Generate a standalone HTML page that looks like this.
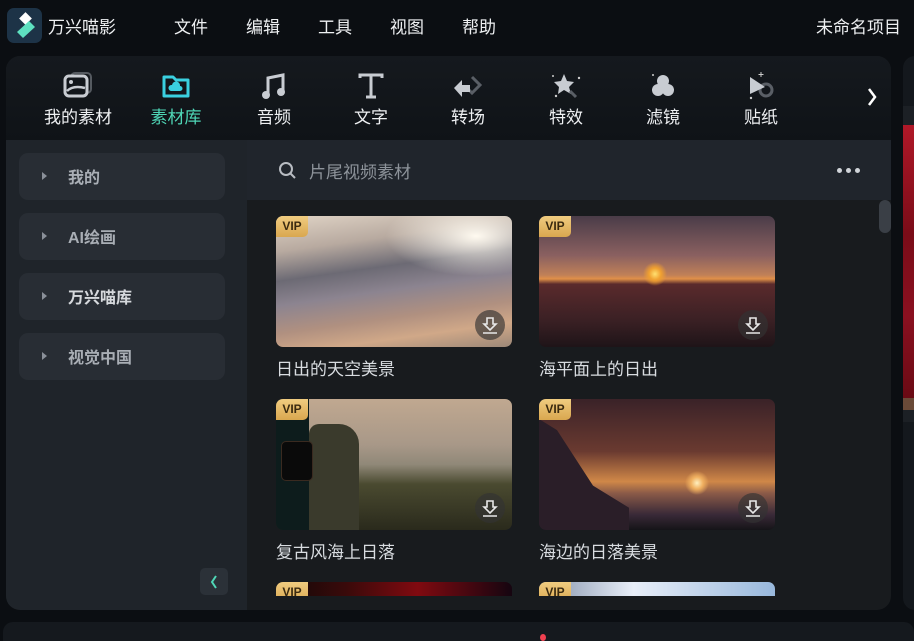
<!DOCTYPE html>
<html><head><meta charset="utf-8"><style>
*{margin:0;padding:0;box-sizing:border-box}
html,body{width:914px;height:641px;overflow:hidden}
body{background:#0b0e12;font-family:"Liberation Sans","Noto Sans CJK SC",sans-serif;color:#e6e8eb;position:relative}
.abs{position:absolute}
.menu{top:13px;font-size:17px;color:#eef0f2}
.tab{position:absolute;top:71px;width:80px;text-align:center}
.tab svg{display:block;margin:0 auto;height:30px}
.tab span{display:block;font-size:17px;margin-top:2px;color:#eef0f2}
.side{position:absolute;left:19px;width:206px;height:47px;background:#282d34;border-radius:9px}
.side .tri{position:absolute;left:23px;top:19px;width:0;height:0;border-left:5px solid #8a9099;border-top:4px solid transparent;border-bottom:4px solid transparent}
.side b{position:absolute;left:49px;top:11px;font-size:16px;color:#a9aeb5}
.card{position:absolute;width:236px;height:131px;border-radius:7px;overflow:hidden}
.vip{position:absolute;left:0;top:0;width:32px;height:21px;background:linear-gradient(#f0cc80,#d9a74f);border-radius:0 0 5px 0;color:#3a2a10;font:bold 12px "Liberation Sans",sans-serif;text-align:center;line-height:21px}
.dl{position:absolute;right:7px;bottom:7px;width:30px;height:30px;border-radius:50%;background:rgba(50,50,50,.65)}
.dl svg{position:absolute;left:7px;top:6px}
.lbl{position:absolute;font-size:17px;color:#d8dce0}
</style></head><body>
<!-- top bar -->
<div class="abs" style="left:7px;top:8px;width:35px;height:35px;border-radius:7px;background:#1d3347"></div>
<svg class="abs" style="left:7px;top:8px" width="35" height="35"><rect x="14" y="6" width="9" height="9" fill="#fff" transform="rotate(45 18.5 10.5)"/><path d="M10 24 L22 13 L28 19 L16 30 Z" fill="#5ee0c0"/></svg>
<div class="abs menu" style="left:48px">万兴喵影</div>
<div class="abs menu" style="left:174px">文件</div>
<div class="abs menu" style="left:246px">编辑</div>
<div class="abs menu" style="left:318px">工具</div>
<div class="abs menu" style="left:390px">视图</div>
<div class="abs menu" style="left:462px">帮助</div>
<div class="abs menu" style="left:816px">未命名项目</div>

<!-- main panel -->
<div class="abs" style="left:6px;top:56px;width:885px;height:554px;border-radius:14px;background:#181b1e;overflow:hidden">
 <div class="abs" style="left:0;top:0;width:885px;height:84px;background:linear-gradient(#15191e,#0f1317)"></div>
 <div class="abs" style="left:0;top:84px;width:241px;height:470px;background:#1f242a"></div>
 <div class="abs" style="left:241px;top:84px;width:644px;height:60px;background:#20252c"></div>
</div>
<!-- tabs -->
<div class="tab" style="left:38px"><svg width="34" height="30" viewBox="0 0 34 30"><rect x="10" y="2" width="20" height="20" rx="4" fill="none" stroke="#555a60" stroke-width="2"/><rect x="4" y="5" width="22" height="20" rx="4" fill="#12161b" stroke="#c8ccd2" stroke-width="3"/><circle cx="10" cy="11" r="2" fill="#c8ccd2"/><path d="M6 20 Q12 14 24 17" stroke="#c8ccd2" stroke-width="2.5" fill="none"/></svg><span>我的素材</span></div>
<div class="tab" style="left:136px"><svg width="30" height="30"><path d="M3 6 h9 l3 3 h12 v16 h-24 z" fill="none" stroke="#3ad0e0" stroke-width="3" stroke-linejoin="round"/><path d="M10 20 a3 3 0 0 1 1-6 a4 4 0 0 1 8 1 a2.5 2.5 0 0 1 0 5z" fill="#3ad0e0"/></svg><span style="color:#4fd6b6">素材库</span></div>
<div class="tab" style="left:234px"><svg width="30" height="30"><path d="M9 24 V7 L24 4 V21" stroke="#c8ccd2" stroke-width="3" fill="none"/><circle cx="7" cy="24" r="4" fill="#c8ccd2"/><circle cx="22" cy="21" r="4" fill="#c8ccd2"/></svg><span>音频</span></div>
<div class="tab" style="left:331px"><svg width="30" height="30"><path d="M4 7 V4 H26 V7 M15 4 V26 M10 26 H20" stroke="#c8ccd2" stroke-width="3" fill="none"/></svg><span>文字</span></div>
<div class="tab" style="left:428px"><svg width="36" height="30"><path d="M22 6 l8 8 -8 8 -4-4" stroke="#5a5f66" stroke-width="3" fill="none"/><path d="M4 17 l8-8 v5 h8 v7 h-8 v5z" fill="#c8ccd2"/></svg><span>转场</span></div>
<div class="tab" style="left:526px"><svg width="36" height="30"><path d="M16 3 l3 7 7 1 -5 5 2 7 -7-4 -6 4 1-7 -5-5 7-1z" fill="#c8ccd2"/><path d="M22 20 l6 6" stroke="#5a5f66" stroke-width="3"/><circle cx="5" cy="5" r="1" fill="#ccc"/><circle cx="31" cy="7" r="1.2" fill="#ccc"/><circle cx="8" cy="25" r="1.2" fill="#ccc"/></svg><span>特效</span></div>
<div class="tab" style="left:623px"><svg width="30" height="30"><circle cx="15" cy="10" r="6" fill="#c8ccd2"/><circle cx="10" cy="19" r="6" fill="#c8ccd2"/><circle cx="20" cy="19" r="6" fill="#c8ccd2"/><circle cx="5" cy="4" r="1" fill="#ccc"/></svg><span>滤镜</span></div>
<div class="tab" style="left:721px"><svg width="34" height="30"><circle cx="22" cy="19" r="6" fill="none" stroke="#5a5f66" stroke-width="3"/><path d="M6 6 L21 16 L6 23 Z" fill="#c8ccd2"/><path d="M17 1 v5 M14.5 3.5 h5" stroke="#ccc" stroke-width="1"/><circle cx="7" cy="27" r="1.2" fill="#ccc"/></svg><span>贴纸</span></div>
<svg class="abs" style="left:866px;top:86px" width="12" height="22"><path d="M3 3 L9 11 L3 19" stroke="#fff" stroke-width="2.5" fill="none"/></svg>

<!-- sidebar -->
<div class="side" style="top:153px"><i class="tri"></i><b>我的</b></div>
<div class="side" style="top:213px"><i class="tri"></i><b>AI绘画</b></div>
<div class="side" style="top:273px"><i class="tri"></i><b style="color:#d6d9dd">万兴喵库</b></div>
<div class="side" style="top:333px"><i class="tri"></i><b>视觉中国</b></div>
<div class="abs" style="left:200px;top:568px;width:28px;height:27px;border-radius:5px;background:#2b3138"></div>
<svg class="abs" style="left:208px;top:573px" width="12" height="18"><path d="M8 3 L4 9 L8 15" stroke="#4fd6b6" stroke-width="2" fill="none"/></svg>

<!-- search -->
<svg class="abs" style="left:278px;top:161px" width="20" height="20"><circle cx="8" cy="8" r="6" stroke="#b8bcc2" stroke-width="2" fill="none"/><path d="M12.5 12.5 L17 17" stroke="#b8bcc2" stroke-width="2"/></svg>
<div class="abs" style="left:309px;top:158px;font-size:17px;color:#8d939a">片尾视频素材</div>
<div class="abs" style="left:837px;top:168px;width:5px;height:5px;border-radius:50%;background:#d0d4d9;box-shadow:9px 0 #d0d4d9,18px 0 #d0d4d9"></div>
<div class="abs" style="left:879px;top:200px;width:12px;height:33px;border-radius:6px;background:#3a3f46"></div>

<!-- cards -->
<div class="card" style="left:276px;top:216px;background:radial-gradient(ellipse 90px 40px at 200px 20px,#fffaf0 0%,rgba(255,245,230,0) 100%),linear-gradient(172deg,#e0d4c6 0%,#b8aaa0 22%,#6c6a74 40%,#8c8490 55%,#b09080 72%,#d0a888 85%,#9c8878 100%)"><div class="vip">VIP</div><div class="dl"><svg width="16" height="18"><path d="M5 2 h6 v6 h3 l-6 6 -6-6 h3z M1 17 h14" stroke="#e8e8e8" stroke-width="1.6" fill="none"/></svg></div></div>
<div class="lbl" style="left:276px;top:355px">日出的天空美景</div>
<div class="card" style="left:539px;top:216px;background:radial-gradient(circle 12px at 116px 58px,#ffe070 0%,#f0a030 50%,rgba(240,140,40,0) 100%),linear-gradient(180deg,#4a3c48 0%,#8a6060 30%,#c08058 45%,#e09048 48%,#5a2a2c 52%,#3a2024 80%,#1e1418 100%)"><div class="vip">VIP</div><div class="dl"><svg width="16" height="18"><path d="M5 2 h6 v6 h3 l-6 6 -6-6 h3z M1 17 h14" stroke="#e8e8e8" stroke-width="1.6" fill="none"/></svg></div></div>
<div class="lbl" style="left:539px;top:355px">海平面上的日出</div>
<div class="card" style="left:276px;top:399px;background:linear-gradient(180deg,#c0a890 0%,#a89888 35%,#908878 50%,#4a4a30 65%,#2a2a1c 100%)"><div class="abs" style="left:33px;top:25px;width:50px;height:106px;background:#3a3a2c;border-radius:10px 20px 0 0"></div><div class="abs" style="left:0;top:0;width:33px;height:131px;background:#0d1c1c"></div><div class="abs" style="left:5px;top:42px;width:32px;height:40px;border-radius:5px;background:#0a0a0a;border:1px solid #3a2a20"></div><div class="vip">VIP</div><div class="dl"><svg width="16" height="18"><path d="M5 2 h6 v6 h3 l-6 6 -6-6 h3z M1 17 h14" stroke="#e8e8e8" stroke-width="1.6" fill="none"/></svg></div></div>
<div class="lbl" style="left:276px;top:538px">复古风海上日落</div>
<div class="card" style="left:539px;top:399px;background:radial-gradient(circle 12px at 158px 84px,#fff0c0 0%,#f0b060 50%,rgba(240,150,60,0) 100%),linear-gradient(180deg,#3a2228 0%,#6a3a30 40%,#d08848 63%,#8a5a48 72%,#3a2a38 88%,#151418 100%)"><div class="abs" style="left:0;top:20px;width:90px;height:111px;background:#2a1e28;clip-path:polygon(0 0,20% 10%,60% 60%,100% 80%,100% 100%,0 100%)"></div><div class="vip">VIP</div><div class="dl"><svg width="16" height="18"><path d="M5 2 h6 v6 h3 l-6 6 -6-6 h3z M1 17 h14" stroke="#e8e8e8" stroke-width="1.6" fill="none"/></svg></div></div>
<div class="lbl" style="left:539px;top:538px">海边的日落美景</div>
<div class="card" style="left:276px;top:582px;height:14px;border-radius:7px 7px 0 0;background:linear-gradient(90deg,#100808,#3a0a0a 30%,#800a10 60%,#150510)"><div class="vip">VIP</div></div>
<div class="card" style="left:539px;top:582px;height:14px;border-radius:7px 7px 0 0;background:linear-gradient(90deg,#8090a8,#e8eef8 40%,#98b8dc)"><div class="vip">VIP</div></div>

<!-- right panel -->
<div class="abs" style="left:903px;top:56px;width:20px;height:554px;border-radius:12px 0 0 12px;background:#14181d;overflow:hidden">
 <div class="abs" style="left:0;top:50px;width:20px;height:19px;background:#1c2025"></div>
 <div class="abs" style="left:0;top:69px;width:20px;height:273px;background:linear-gradient(180deg,#b01828,#7a0c18 40%,#8a1020 70%,#6a0a14)"></div>
 <div class="abs" style="left:0;top:342px;width:20px;height:12px;background:#6a4a38"></div>
 <div class="abs" style="left:0;top:354px;width:20px;height:12px;background:#1c2025"></div>
</div>
<!-- bottom -->
<div class="abs" style="left:3px;top:622px;width:911px;height:30px;border-radius:10px;background:#15191e"></div>
<div class="abs" style="left:540px;top:634px;width:6px;height:7px;border-radius:50%;background:#f04050"></div>
</body></html>
